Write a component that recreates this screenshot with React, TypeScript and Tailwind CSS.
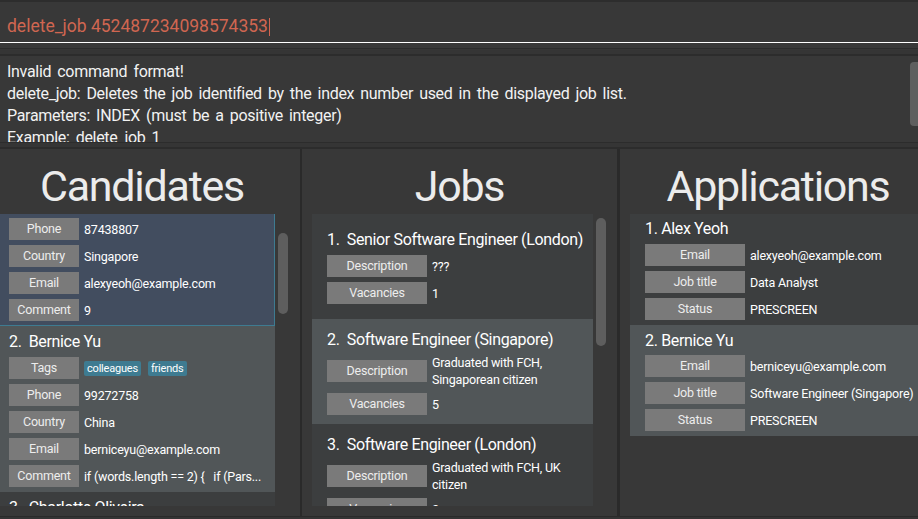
import React from "react";

type Field = { label: string; value?: React.ReactNode; tags?: string[]; nowrap?: boolean };

function FieldRow({ f, w }: { f: Field; w: string }) {
  return (
    <div className="flex items-center gap-[5px]">
      <div
        className={`flex h-[22px] shrink-0 items-center justify-center bg-[#7a7a7a] text-[12.5px] tracking-[-0.2px] text-[#ededed] ${w}`}
      >
        {f.label}
      </div>
      {f.tags ? (
        <div className="flex gap-[7px]">
          {f.tags.map((t) => (
            <span
              key={t}
              className="rounded-[2px] bg-[#3e7b91] px-[3px] text-[11px] leading-[15px] tracking-[-0.2px] text-white"
            >
              {t}
            </span>
          ))}
        </div>
      ) : (
        <div
          className={`min-w-0 flex-1 text-[12.5px] leading-[17px] tracking-[-0.2px] text-white ${
            f.nowrap ? "overflow-hidden whitespace-pre" : ""
          }`}
        >
          {f.value}
        </div>
      )}
    </div>
  );
}

function Card({
  title,
  fields,
  w,
  bg,
  className = "",
}: {
  title?: string;
  fields: Field[];
  w: string;
  bg: string;
  className?: string;
}) {
  return (
    <div className={`flex shrink-0 flex-col ${bg} ${className}`}>
      {title && (
        <div className="h-[22px] whitespace-pre text-[16px] leading-[22px] tracking-[-0.35px] text-white">{title}</div>
      )}
      {fields.length > 0 && (
        <div className="flex flex-col gap-[5px]">
          {fields.map((f) => (
            <FieldRow key={f.label} f={f} w={w} />
          ))}
        </div>
      )}
    </div>
  );
}

function Panel({ title, width, children }: { title: string; width: string; children: React.ReactNode }) {
  return (
    <div className={`flex shrink-0 flex-col bg-[#383838] pb-[10px] ${width}`}>
      <div className="h-[65px] pt-[16px] text-center text-[43px] leading-none tracking-[-1.25px] text-[#ececec]">
        {title}
      </div>
      {children}
    </div>
  );
}

export default function App() {
  return (
    <div className="flex h-screen w-full flex-col overflow-hidden bg-[#383838] font-[Roboto,sans-serif]">
      {/* command box */}
      <div className="h-[43px] shrink-0 border-t-2 border-b border-t-[#2d2d2d] border-b-white px-[7px] pt-[13px]">
        <div className="flex text-[17.5px] leading-[22px] text-[#d06651]">
          <span>delete_job 452487234098574353</span>
          <span className="ml-[1px] mt-[3px] h-[18px] w-px bg-[#d06651]" />
        </div>
      </div>
      <div className="h-[13px] shrink-0 border-b-2 border-b-[#2c2c2c] pt-[5px]">
        <div className="h-[6px] border-t border-t-[#2c2c2c] bg-[#353535]" />
      </div>

      {/* result display */}
      <div className="flex h-[86px] shrink-0 overflow-hidden">
        <div className="flex-1 px-[7px] pt-[5px] text-[16px] leading-[22px] tracking-[-0.3px] text-[#f2f2f2] [word-spacing:2.4px]">
          <div>Invalid command format!</div>
          <div>delete_job: Deletes the job identified by the index number used in the displayed job list.</div>
          <div>Parameters: INDEX (must be a positive integer)</div>
          <div>Example: delete_job 1</div>
        </div>
        <div className="mt-[6px] h-[64px] w-[8px] rounded-l-[4px] bg-[#5f5f5f]" />
      </div>
      <div className="h-[7px] shrink-0 border-y border-y-[#2c2c2c] border-b-2 bg-[#353535]" />

      {/* panels */}
      <div className="flex h-[367px] shrink-0 -ml-[16px] bg-[#2a2a2a]">
        <Panel title="Candidates" width="w-[316px]">
          <div className="flex min-h-0 flex-1 pl-[10px]">
            <div className="flex w-[281px] flex-col overflow-hidden">
              <Card
                w="w-[70px]"
                bg="bg-[#424d5f]"
                className="border border-t-0 border-[#3e7b91] pb-[4px] pl-[14px] pt-[4px]"
                fields={[
                  { label: "Phone", value: "87438807" },
                  { label: "Country", value: "Singapore" },
                  { label: "Email", value: "alexyeoh@example.com" },
                  { label: "Comment", value: "9" },
                ]}
              />
              <Card
                w="w-[70px]"
                bg="bg-[#515658]"
                className="gap-[4px] pb-[5px] pl-[15px] pt-[5px]"
                title="2.  Bernice Yu"
                fields={[
                  { label: "Tags", tags: ["colleagues", "friends"] },
                  { label: "Phone", value: "99272758" },
                  { label: "Country", value: "China" },
                  { label: "Email", value: "berniceyu@example.com" },
                  { label: "Comment", value: "if (words.length == 2) {   if (Pars...", nowrap: true },
                ]}
              />
              <Card
                w="w-[70px]"
                bg="bg-[#3c3e3f]"
                className="pb-[5px] pl-[15px] pt-[5px]"
                title="3.  Charlotte Oliveira"
                fields={[]}
              />
            </div>
            <div className="ml-[3px] mt-[19px] h-[81px] w-[10px] rounded-full bg-[#5e5e5e]" />
          </div>
        </Panel>
        <div className="w-[2px] shrink-0" />
        <Panel title="Jobs" width="w-[315px]">
          <div className="flex min-h-0 flex-1 pl-[10px]">
            <div className="flex w-[281px] flex-col overflow-hidden">
              <Card
                w="w-[100px]"
                bg="bg-[#3c3e3f]"
                className="gap-[4px] px-[15px] py-[15px]"
                title="1.  Senior Software Engineer (London)"
                fields={[
                  { label: "Description", value: "???" },
                  { label: "Vacancies", value: "1" },
                ]}
              />
              <Card
                w="w-[100px]"
                bg="bg-[#515658]"
                className="gap-[3px] px-[15px] pb-[9px] pt-[10px]"
                title="2.  Software Engineer (Singapore)"
                fields={[
                  { label: "Description", value: "Graduated with FCH, Singaporean citizen" },
                  { label: "Vacancies", value: "5" },
                ]}
              />
              <Card
                w="w-[100px]"
                bg="bg-[#3c3e3f]"
                className="gap-[3px] px-[15px] pb-[9px] pt-[10px]"
                title="3.  Software Engineer (London)"
                fields={[
                  { label: "Description", value: "Graduated with FCH, UK citizen" },
                  { label: "Vacancies", value: "2" },
                ]}
              />
            </div>
            <div className="ml-[3px] mt-[4px] h-[128px] w-[10px] rounded-full bg-[#5e5e5e]" />
          </div>
        </Panel>
        <div className="w-[3px] shrink-0" />
        <Panel title="Applications" width="w-[316px]">
          <div className="flex min-h-0 flex-1 px-[10px]">
            <div className="flex flex-1 flex-col overflow-hidden">
              <Card
                w="w-[100px]"
                bg="bg-[#3c3e3f]"
                className="gap-[4px] pb-[5px] pl-[15px] pt-[4px]"
                title="1. Alex Yeoh"
                fields={[
                  { label: "Email", value: "alexyeoh@example.com" },
                  { label: "Job title", value: "Data Analyst" },
                  { label: "Status", value: "PRESCREEN" },
                ]}
              />
              <Card
                w="w-[100px]"
                bg="bg-[#515658]"
                className="gap-[3px] pb-[5px] pl-[15px] pt-[5px]"
                title="2. Bernice Yu"
                fields={[
                  { label: "Email", value: "berniceyu@example.com" },
                  { label: "Job title", value: "Software Engineer (Singapore)", nowrap: true },
                  { label: "Status", value: "PRESCREEN" },
                ]}
              />
            </div>
          </div>
        </Panel>
      </div>
      <div className="flex-1 border-t border-t-[#2a2a2a] bg-[#343434]" />
    </div>
  );
}
